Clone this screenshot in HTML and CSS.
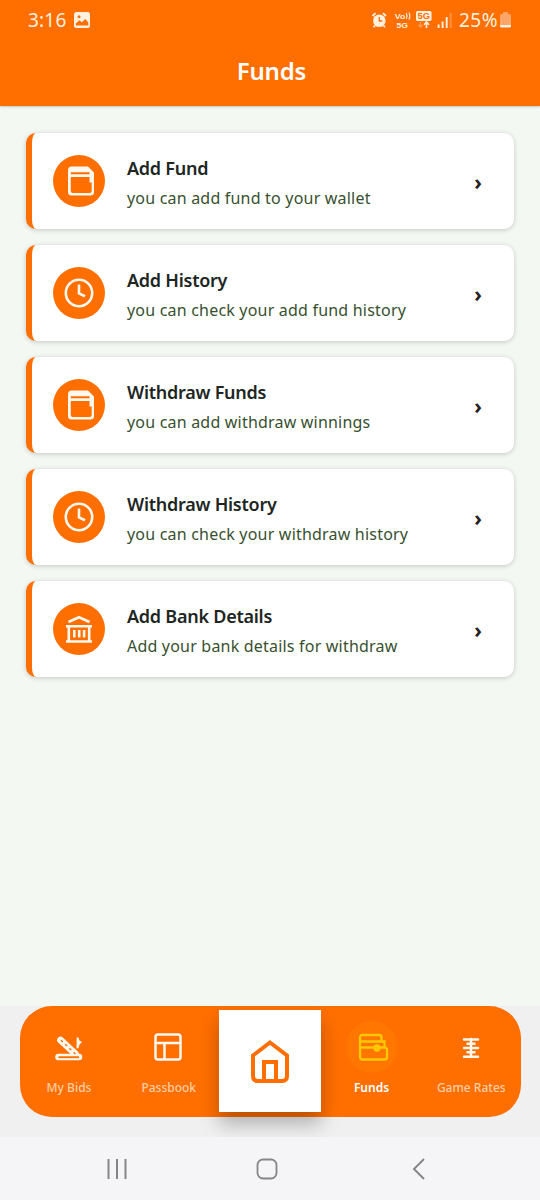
FILE: index.html
```html
<!DOCTYPE html>
<html lang="en">
<head>
<meta charset="utf-8">
<title>Funds</title>
<link rel="stylesheet" href="styles.css">
</head>
<body>
<header class="header">
  <div class="status">
    <span class="time">3:16</span>
    <svg class="photo" width="16" height="16" viewBox="0 0 16 16"><rect width="16" height="16" rx="2.5" fill="#fff0df"/><path d="M1.800 13.500V11.500l3.500-3.200 2.500 2 3.500-3.300 3 3.500v3z" fill="#ff6f00"/><circle cx="5" cy="4.800" r="1.500" fill="#ff6f00"/></svg>
    <svg class="signals" width="86" height="20" viewBox="368 10 86 20">
      <g fill="none" stroke="#fff0df"><circle cx="379.300" cy="20.700" r="6.300" fill="#fff0df" stroke="none"/><path d="M372.500 16l3-2.800M386 16l-3-2.800M375 25.500l-1.500 1.700M383.500 25.500l1.500 1.700" stroke-width="1.800"/><path d="M379.300 17v4h3" stroke="#ff6f00" stroke-width="1.300"/></g>
      <g fill="#fff0df" font-family="Liberation Sans, sans-serif" font-weight="700"><text x="394.800" y="18.800" font-size="7.800" textLength="10.500" lengthAdjust="spacingAndGlyphs">Vo</text><text x="396.500" y="28" font-size="7.800" textLength="11.500" lengthAdjust="spacingAndGlyphs">5G</text></g>
      <path d="M406.300 13.200q1.500 2.800 0 5.600M408.800 12.500q2.200 3.500 0 7" fill="none" stroke="#fff0df" stroke-width="1.200"/>
      <rect x="416" y="11" width="15.500" height="10" rx="1.500" fill="#fff0df"/>
      <text x="417.500" y="19.300" font-family="Liberation Sans, sans-serif" font-weight="700" font-size="9" textLength="12.500" lengthAdjust="spacingAndGlyphs" fill="#ff6f00">5G</text>
      <path d="M426.500 28v-5.500M424 24.800l2.500-2.800 2.500 2.800" fill="none" stroke="#fff0df" stroke-width="1.600"/>
      <path d="M420.500 22v5M418.500 25l2 2.200 2-2.200" fill="none" stroke="#ffa260" stroke-width="1.200"/>
      <path d="M438.600 24.500V28M442.600 21.500V28M446.700 17V28" stroke="#fff0df" stroke-width="1.900"/><path d="M450.700 13V28" stroke="#ff9448" stroke-width="1.900"/>
    </svg>
    <span class="percent">25%</span>
    <svg class="battery" width="11" height="16" viewBox="0 0 11 16"><path d="M3 0h5v2h1.500q1.500 0 1.500 1.500V15H0V3.500Q0 2 1.500 2H3z" fill="#ffa668"/><path d="M0 13h11V14q0 1.500-1.500 1.500h-8Q0 15.500 0 14z" fill="#fff0df"/></svg>
  </div>
  <h1 class="title">Funds</h1>
</header>

<svg width="0" height="0" class="defs">
  <symbol id="wallet" viewBox="0 0 28 30"><path d="M4.500 .5H21L27 6.500V26q0 3.500-3.500 3.500h-19Q1 29.500 1 26V4Q1 .5 4.500 .5z" fill="#fff8ef"/><path d="M3.800 6.200h18.700v2H3.800zM3.800 11h18.700v5.500h2.200v8.500q0 2-2 2H5.800q-2 0-2-2z" fill="#ff6f00"/></symbol>
  <symbol id="clock" viewBox="0 0 30 30"><circle cx="15" cy="15" r="13.200" fill="none" stroke="#fff8ef" stroke-width="2.600"/><path d="M15 6.500v9l6 2.800" fill="none" stroke="#fff8ef" stroke-width="2.600"/></symbol>
  <symbol id="bank" viewBox="0 0 28 28"><path d="M3.500 7 14 2.200 24.500 7M1 11.300h26M1 26.500h26M3.800 11v15M24.200 11v15M9.300 15v7.500M14.200 15v7.500M19.100 15v7.500" fill="none" stroke="#fff8ef" stroke-width="2.600"/></symbol>
</svg>

<main class="list">
  <a class="card"><span class="badge"><svg class="purse" width="28" height="30"><use href="#wallet"/></svg></span><span class="copy"><b class="name">Add Fund</b><span class="desc">you can add fund to your wallet</span></span><span class="arrow">›</span></a>
  <a class="card"><span class="badge"><svg width="30" height="30"><use href="#clock"/></svg></span><span class="copy"><b class="name">Add History</b><span class="desc">you can check your add fund history</span></span><span class="arrow">›</span></a>
  <a class="card"><span class="badge"><svg class="purse" width="28" height="30"><use href="#wallet"/></svg></span><span class="copy"><b class="name">Withdraw Funds</b><span class="desc">you can add withdraw winnings</span></span><span class="arrow">›</span></a>
  <a class="card"><span class="badge"><svg width="30" height="30"><use href="#clock"/></svg></span><span class="copy"><b class="name">Withdraw History</b><span class="desc">you can check your withdraw history</span></span><span class="arrow">›</span></a>
  <a class="card"><span class="badge"><svg width="28" height="28"><use href="#bank"/></svg></span><span class="copy"><b class="name">Add Bank Details</b><span class="desc">Add your bank details for withdraw</span></span><span class="arrow">›</span></a>
</main>

<footer class="dock">
  <nav class="tabs">
    <a class="tab"><span class="glyph"><svg width="30" height="30" viewBox="0 0 30 30"><g fill="none" stroke="#fff8ef" stroke-linecap="round"><path d="M4.500 25h20.500" stroke-width="6.600"/><path d="M6.500 8 21.500 22" stroke-width="6.800"/><g stroke="#ff6f00" stroke-linecap="butt"><path d="M4.500 25.200h20.500" stroke-width="1.900"/><path d="M7 8.300 21.500 22" stroke-width="1.400" stroke-dasharray="2.500 3.300"/></g></g><path d="M22.700 5.500 24.500 5.500 25.500 8.500 28 10 25.500 12.500 24.500 16 22.500 16.500z" fill="#fff8ef"/></svg></span>My Bids</a>
    <a class="tab"><span class="glyph"><svg class="ledger" width="28" height="28" viewBox="0 0 28 28"><path d="M4 1.500h20q2.500 0 2.500 2.500v20q0 2.500-2.500 2.500H4q-2.500 0-2.500-2.500V4q0-2.500 2.500-2.500zM1.500 10h25M10.500 10v16.500" fill="none" stroke="#fff8ef" stroke-width="2.500"/></svg></span>Passbook</a>
    <a class="home"><svg width="42" height="46" viewBox="0 0 42 46"><path d="M21 4.500 38 17.500V38q0 5-5 5H9q-5 0-5-5V17.500zM15 42V24h12V42" fill="none" stroke="#ff6f00" stroke-width="4"/></svg></a>
    <a class="tab active"><span class="glyph"><svg class="money" width="32" height="30" viewBox="0 0 32 30"><g fill="none" stroke="#ffc800" stroke-width="2.300"><path d="M27.500 15.500V9.500H24.500V5q0-2-2-2H5.500Q3 3 3 5.500v19Q3 27.500 5.500 27.500h22q2.500 0 2.500-2.500V18q0-2.500-2.500-2.500H3M3 9.500H25"/></g><circle cx="20" cy="16" r="3.700" fill="#ffc800"/></svg></span>Funds</a>
    <a class="tab"><span class="glyph"><svg class="rates" width="18" height="22" viewBox="0 0 18 22"><path d="M2 2.500h14M2 11h14M2 19.700h14M9 2v18M5.500 6.700h7M5.500 15.300h7" fill="none" stroke="#fff8ef" stroke-width="2.500" stroke-linecap="round"/></svg></span>Game Rates</a>
  </nav>
</footer>

<nav class="system">
  <svg width="20" height="20" viewBox="0 0 20 20"><path d="M1.500 0v20M10 0v20M18.500 0v20" stroke="#858587" stroke-width="2"/></svg>
  <svg class="overview" width="22" height="22" viewBox="0 0 22 22"><rect x="1.500" y="1.500" width="19" height="19" rx="5.500" fill="none" stroke="#858587" stroke-width="1.800"/></svg>
  <svg width="14" height="22" viewBox="0 0 14 22"><path d="M12 1 2 11l10 10" fill="none" stroke="#858587" stroke-width="1.900"/></svg>
</nav>
</body>
</html>
```

FILE: styles.css
```css
* { box-sizing: border-box; }
body { margin: 0; width: 540px; height: 1200px; overflow: hidden; display: flex; flex-direction: column; background: #f3f8f3; font-family: "Noto Sans", sans-serif; }
svg { display: block; flex: none; }
.defs { position: absolute; }
.header { height: 106px; flex: none; background: #ff6f00; color: #fff; box-shadow: 0 1px 2px #0003; }
.status { height: 40px; padding-left: 28px; display: flex; align-items: center; color: #fff0df; }
.time { width: 46px; font-size: 19px; letter-spacing: .2px; }
.signals { margin-left: 278px; }
.percent { width: 41px; margin-left: 5px; font-size: 19px; line-height: 40px; letter-spacing: .5px; }
.title { margin: 15px 0 0 3px; text-align: center; font-size: 24px; line-height: 32px; font-weight: 600; letter-spacing: -.2px; }
.list { flex: 1; padding: 27px 26px 0; display: flex; flex-direction: column; gap: 16px; }
.card { height: 96px; flex: none; display: flex; align-items: center; padding: 0 32px 0 21px; border-left: 6px solid #ff6f00; border-radius: 10px; background: #fff; box-shadow: 0 1px 5px #0003; }
.badge { width: 52px; height: 52px; flex: none; border-radius: 50%; background: #ff6f00; display: grid; place-items: center; }
.purse { margin-left: 3px; }
.copy { flex: 1; margin-left: 22px; padding-top: 3px; display: flex; flex-direction: column; white-space: nowrap; }
.name { font-size: 18px; line-height: 30px; font-weight: 600; letter-spacing: -.25px; color: #20261f; }
.desc { font-size: 16px; line-height: 30px; letter-spacing: .2px; color: #37502f; }
.arrow { padding-top: 1px; font-size: 21px; line-height: 28px; font-weight: 700; color: #222; }
.dock { height: 131px; flex: none; padding: 0 19.5px; background: #f0f0f0; overflow: hidden; }
.tabs { height: 111px; border-radius: 32px; background: #ff6f00; display: grid; grid-template-columns: 99px 100.5px 102px 101px 98.5px; }
.tab { display: flex; flex-direction: column; align-items: center; padding-top: 15px; font-size: 12px; line-height: 18px; font-weight: 500; color: #ffcda3; white-space: nowrap; }
.glyph { width: 52px; height: 52px; margin-bottom: 6px; border-radius: 50%; display: grid; place-items: center; }
.ledger { margin-right: 2px; }
.money { margin-left: 2px; }
.rates { margin: 1px 1px 0 0; }
.active { color: #fff; font-weight: 600; }
.active .glyph { background: #ff7600; }
.home { height: 102px; margin-top: 4px; display: grid; place-items: center; background: #fff; box-shadow: 0 12px 18px #0004; }
.system { height: 63px; flex: none; padding: 0 114px 0 107px; display: flex; align-items: center; justify-content: space-between; background: #f5f5f8; }
.overview { margin-right: 5px; }
```
